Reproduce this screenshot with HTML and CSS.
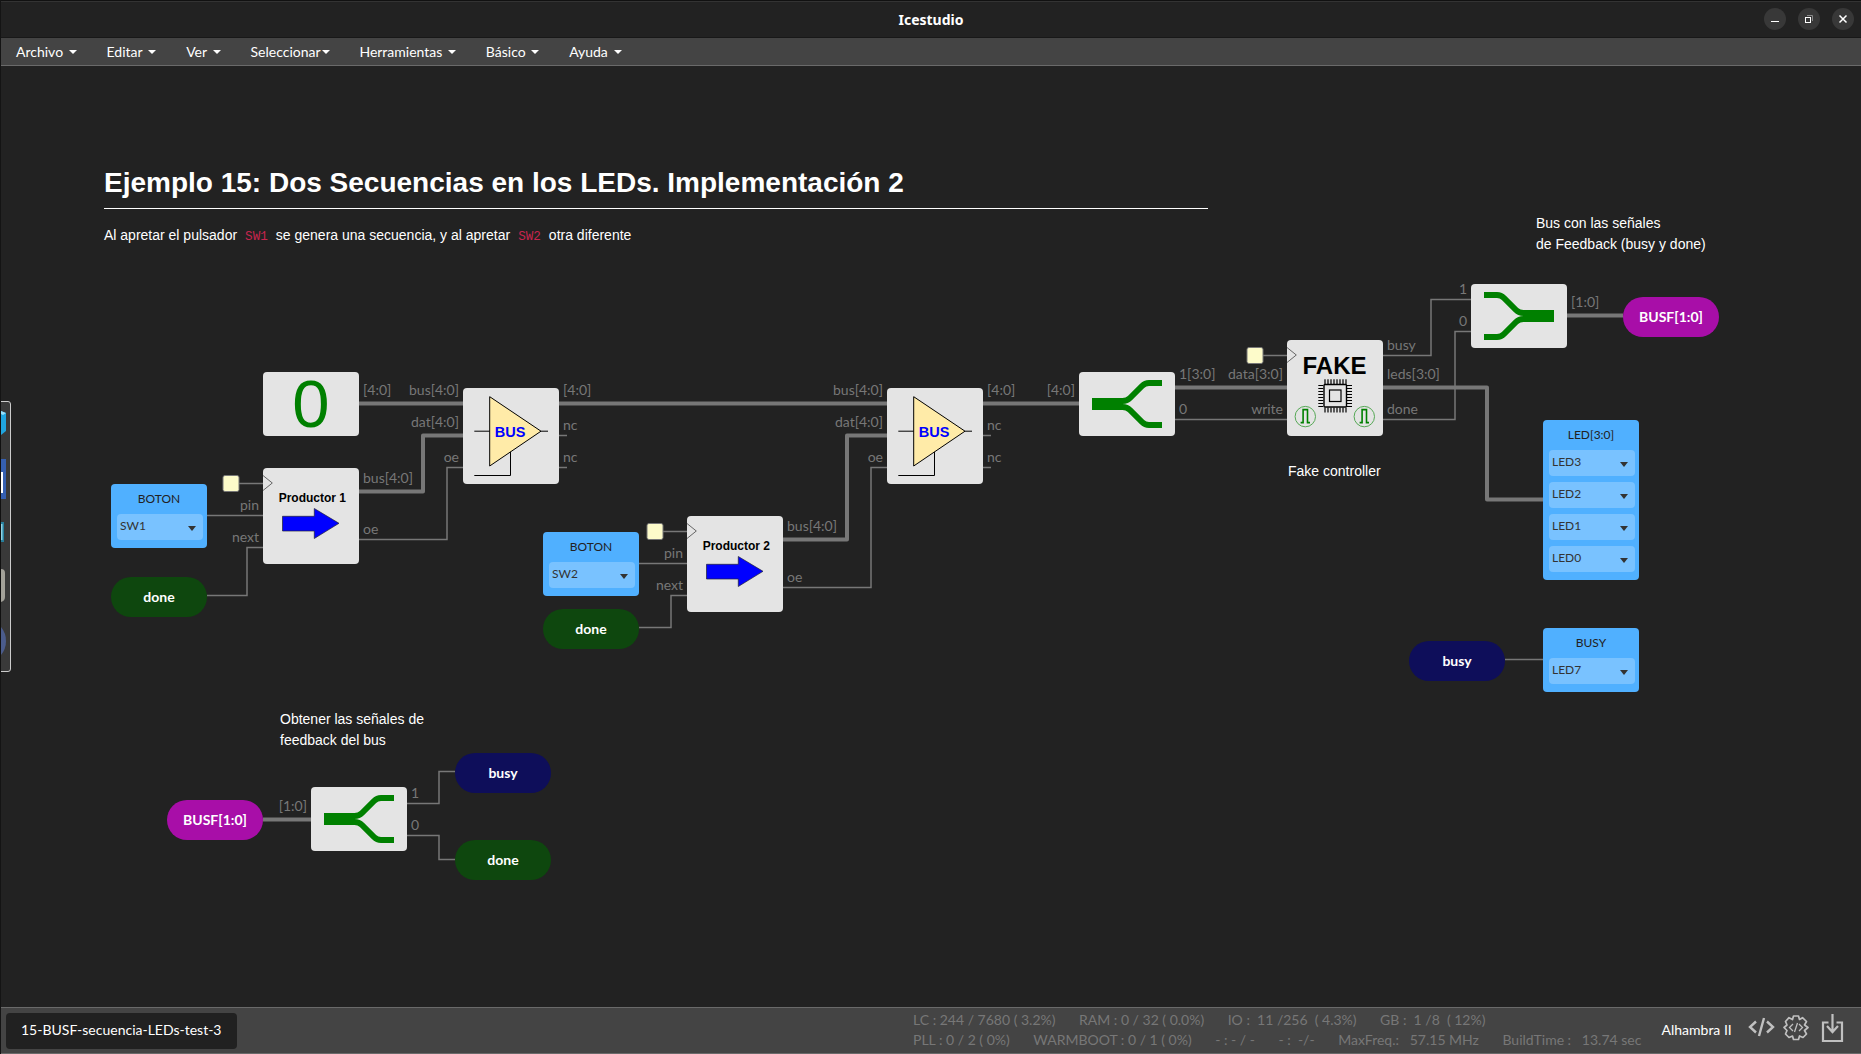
FILE: index.html
```html
<!DOCTYPE html>
<html lang="es">
<head>
<meta charset="utf-8">
<title>Icestudio</title>
<link rel="stylesheet" href="styles.css">
</head>
<body>
<div class="window">
  <header class="titlebar">
    <span class="title">Icestudio</span>
    <div class="window-buttons">
      <svg class="wbtn" viewBox="0 0 22 22"><path d="M7 13.5H15" stroke="#fff"/></svg>
      <svg class="wbtn" viewBox="0 0 22 22"><path d="M9 7.500H14.500V13" stroke="#888"/><rect x="7.500" y="9.500" width="5" height="5" stroke="#fff"/></svg>
      <svg class="wbtn" viewBox="0 0 22 22"><path d="M7.500 7.500L14.500 14.500M14.500 7.500L7.500 14.500" stroke="#fff" stroke-width="1.500"/></svg>
    </div>
  </header>
  <nav class="menu">
    <span class="item">Archivo<i class="caret"></i></span>
    <span class="item">Editar<i class="caret"></i></span>
    <span class="item">Ver<i class="caret"></i></span>
    <span class="item tight">Seleccionar<i class="caret"></i></span>
    <span class="item">Herramientas<i class="caret"></i></span>
    <span class="item">Básico<i class="caret"></i></span>
    <span class="item">Ayuda<i class="caret"></i></span>
  </nav>
  <main class="canvas">
    <svg class="wires" viewBox="0 66 1861 941" width="1861" height="941">
      <defs>
        <g id="split" fill="none" stroke="#008000" stroke-width="6">
          <path d="M13 29H43.500Q48 29 51 26L63 14Q66 11 70 11H83"/>
          <path d="M13 35H43.500Q48 35 51 38L63 50Q66 53 70 53H83"/>
        </g>
        <g id="tristate" fill="none" stroke="#000" stroke-width="1">
          <path d="M11.300 43.200H27M78 43.200H85M11.300 87.500H47.500V60"/>
          <path d="M26.700 8.700L78 43.200L26.700 78Z" fill="#ffeba8"/>
        </g>
        <path id="clk" d="M0 7.500L9.300 15L0 22.500" fill="none" stroke="#666"/>
        <path id="arrow" d="M19.500 48.300H51.300V40.500L76 55.300L51.300 70.500V63H19.500Z" fill="#00f" stroke="#223" stroke-width=".7"/>
        <g id="pulse" fill="none" stroke="#008000">
          <circle r="10.200" stroke="#55a855"/>
          <path d="M-4.700 6H-2.200V-7H2.200V6H4.700" stroke-width="1.600"/>
        </g>
      </defs>

      <g class="thin">
        <path d="M207 515.500H263M207 595.500H247V547.500H263M239 483.500H263"/>
        <path d="M359 539.500H447V467.500H463M559 435.500H567M559 467.500H567"/>
        <path d="M639 563.500H687M639 627.500H671V595.500H687M663 531.500H687"/>
        <path d="M783 587.500H871V467.500H887M983 435.500H991M983 467.500H991"/>
        <path d="M1175 419.500H1287M1263 355.500H1287M1383 355.500H1431V299.500H1471"/>
        <path d="M1383 419.500H1455V331.500H1471M1505 659.500H1543"/>
        <path d="M407 803.500H439V771.500H455M407 835.500H439V859.500H455"/>
      </g>
      <g class="bus">
        <path d="M359 403.500H463M559 403.500H887M983 403.500H1079"/>
        <path d="M359 491.500H423V435.500H463M783 539.500H847V435.500H887"/>
        <path d="M1175 387.500H1287M1383 387.500H1487V499.500H1543"/>
        <path d="M1567 315.500H1623M263 819.500H311"/>
      </g>

      <g class="ports">
        <text x="363" y="395">[4:0]</text><text x="363" y="483">bus[4:0]</text><text x="363" y="534">oe</text>
        <text x="563" y="395">[4:0]</text><text x="563" y="430">nc</text><text x="563" y="462">nc</text>
        <text x="787" y="531">bus[4:0]</text><text x="787" y="582">oe</text>
        <text x="987" y="395">[4:0]</text><text x="987" y="430">nc</text><text x="987" y="462">nc</text>
        <text x="1179" y="379">1[3:0]</text><text x="1179" y="414">0</text>
        <text x="1387" y="350">busy</text><text x="1387" y="379">leds[3:0]</text><text x="1387" y="414">done</text>
        <text x="1571" y="307">[1:0]</text>
        <text x="411" y="798">1</text><text x="411" y="830">0</text>
      </g>
      <g class="ports in">
        <text x="459" y="395">bus[4:0]</text><text x="459" y="427">dat[4:0]</text><text x="459" y="462">oe</text>
        <text x="259" y="510">pin</text><text x="259" y="542">next</text>
        <text x="883" y="395">bus[4:0]</text><text x="883" y="427">dat[4:0]</text><text x="883" y="462">oe</text>
        <text x="683" y="558">pin</text><text x="683" y="590">next</text>
        <text x="1075" y="395">[4:0]</text><text x="1283" y="379">data[3:0]</text><text x="1283" y="414">write</text>
        <text x="1467" y="294">1</text><text x="1467" y="326">0</text>
        <text x="307" y="811">[1:0]</text>
      </g>

      <g class="clocks">
        <rect x="223" y="475.500" width="16" height="16" rx="2"/>
        <rect x="647" y="523.500" width="16" height="16" rx="2"/>
        <rect x="1247" y="347.500" width="16" height="16" rx="2"/>
      </g>

      <g class="blocks">
        <rect x="263" y="372" width="96" height="64" rx="4"/>
        <rect x="463" y="388" width="96" height="96" rx="4"/>
        <rect x="263" y="468" width="96" height="96" rx="4"/>
        <rect x="887" y="388" width="96" height="96" rx="4"/>
        <rect x="687" y="516" width="96" height="96" rx="4"/>
        <rect x="1079" y="372" width="96" height="64" rx="4"/>
        <rect x="1287" y="340" width="96" height="96" rx="4"/>
        <rect x="1471" y="284" width="96" height="64" rx="4"/>
        <rect x="311" y="787" width="96" height="64" rx="4"/>
      </g>
      <text class="zero" x="311" y="427">0</text>
      <use href="#tristate" x="463" y="388"/><use href="#tristate" x="887" y="388"/>
      <text class="bus-name" x="510" y="437">BUS</text><text class="bus-name" x="934" y="437">BUS</text>
      <use href="#clk" x="263" y="468"/><use href="#clk" x="687" y="516"/><use href="#clk" x="1287" y="340"/>
      <use href="#arrow" x="263" y="468"/><use href="#arrow" x="687" y="516"/>
      <text class="producer" x="312.300" y="502">Productor 1</text>
      <text class="producer" x="736.300" y="550">Productor 2</text>
      <use href="#split" x="1079" y="372"/><use href="#split" x="311" y="787"/>
      <use href="#split" transform="translate(1567 284) scale(-1 1)"/>
      <text class="fake" x="1334.500" y="374">FAKE</text>
      <g fill="none" stroke="#000">
        <rect x="1324" y="384.500" width="22.500" height="22.500" rx="1" stroke-width="1.400"/>
        <rect x="1329.500" y="390" width="11.500" height="11.500" stroke-width="1.200"/>
        <path stroke-width="1.200" d="M1325 379.300v5M1328 379.300v5M1331 379.300v5M1334 379.300v5M1337 379.300v5M1340 379.300v5M1343 379.300v5M1346 379.300v5M1325 407.500v5M1328 407.500v5M1331 407.500v5M1334 407.500v5M1337 407.500v5M1340 407.500v5M1343 407.500v5M1346 407.500v5"/>
        <path stroke-width="1.200" d="M1318.300 385.500h5M1318.300 388.500h5M1318.300 391.500h5M1318.300 394.500h5M1318.300 397.500h5M1318.300 400.500h5M1318.300 403.500h5M1318.300 406.500h5M1347 385.500h5M1347 388.500h5M1347 391.500h5M1347 394.500h5M1347 397.500h5M1347 400.500h5M1347 403.500h5M1347 406.500h5"/>
      </g>
      <use href="#pulse" x="1305.300" y="416.600"/><use href="#pulse" x="1364.300" y="416.600"/>
    </svg>

    <section class="note note-title">
      <h1>Ejemplo 15: Dos Secuencias en los LEDs. Implementación 2</h1>
      <p>Al apretar el pulsador <code>SW1</code> se genera una secuencia, y al apretar <code>SW2</code> otra diferente</p>
    </section>
    <p class="note note-bus">Bus con las señales<br>de Feedback (busy y done)</p>
    <p class="note note-fake">Fake controller</p>
    <p class="note note-get">Obtener las señales de<br>feedback del bus</p>

    <div class="io sw1"><span>BOTON</span><div class="select">SW1</div></div>
    <div class="io sw2"><span>BOTON</span><div class="select">SW2</div></div>
    <div class="io leds"><span>LED[3:0]</span><div class="select">LED3</div><div class="select">LED2</div><div class="select">LED1</div><div class="select">LED0</div></div>
    <div class="io led7"><span>BUSY</span><div class="select">LED7</div></div>

    <div class="pill done done-a">done</div>
    <div class="pill done done-b">done</div>
    <div class="pill done done-c">done</div>
    <div class="pill busy busy-a">busy</div>
    <div class="pill busy busy-b">busy</div>
    <div class="pill busf busf-a">BUSF[1:0]</div>
    <div class="pill busf busf-b">BUSF[1:0]</div>

    <svg class="dock" viewBox="0 0 11 272" width="11" height="272">
      <path d="M0 .5H8Q10.500 .5 10.500 3V268Q10.500 270.500 8 270.500H0" fill="#393939" stroke="#ccc"/>
      <path d="M1 10L6 12V30L1 34Z" fill="#20a5df"/><path d="M1 10L6 12L3 14L1 13Z" fill="#9be0fa"/>
      <path d="M1 58H6V98H1Z" fill="#355fb0"/><path d="M1 71H3V92H1Z" fill="#fff"/>
      <path d="M1 121H4V141H1Z" fill="#277f9c"/><path d="M1 123H2.500V139H1Z" fill="#8fd3e6"/>
      <path d="M1 168Q5 168 5 172V196Q5 200 1 201Z" fill="#a3a199"/>
      <path d="M1 226Q6 232 6 240T1 254Z" fill="#4b5c8c"/>
      <path d="M.5 0V272" stroke="#101010"/>
    </svg>
  </main>
  <footer class="status">
    <div class="tab">15-BUSF-secuencia-LEDs-test-3</div>
    <div class="stats">
      <div class="row"><span>LC : 244 / 7680 ( 3.2%)</span><span>RAM : 0 / 32 ( 0.0%)</span><span>IO :  11 /256  ( 4.3%)</span><span>GB :  1 /8  ( 12%)</span></div>
      <div class="row"><span>PLL : 0 / 2 ( 0%)</span><span>WARMBOOT : 0 / 1 ( 0%)</span><span>- : - / -</span><span>- :  -/-</span><span>MaxFreq.:   57.15 MHz</span><span>BuildTime :   13.74 sec</span></div>
    </div>
    <span class="board">Alhambra II</span>
    <svg class="tools" viewBox="0 0 100 32" width="100" height="32" fill="none" stroke="#c0c0c0">
      <path d="M9 7.500L3 13L9 18.500M20 7.500L26 13L20 18.500M17 4L12 22" stroke-width="2.400"/>
      <path d="M46.500 2H51.500L52.500 5.500L55.500 3.700L59.500 7.500L57.500 11L61 13.500L57.500 16.500L59.500 20L56 23.500L52.500 22L51.500 25.500H46.500L45.500 22L42 23.500L38.500 20L40 16.500L37 13.500L40 11L38.500 7.500L42 3.700L45.500 5.500Z" stroke-width="1.700" stroke-linejoin="round"/>
      <path d="M46 10L42.500 13.500L46 17M52 10L55.500 13.500L52 17M50.500 9L47.500 18" stroke-width="1.300"/>
      <path d="M81.500 8.500H76V27H95V8.500H89.500" stroke-width="2.200"/><path d="M85.500 0V17.500M80 12L85.500 18L91 12" stroke-width="2.200"/>
    </svg>
  </footer>
</div>
</body>
</html>
```
FILE: styles.css
```css
* { box-sizing: border-box; }
body { margin: 0; background: #222; color: #fff; font: 14px Lato, sans-serif; overflow: hidden; }
.window { height: 1054px; display: flex; flex-direction: column; border-left: 1px solid #141414; }

.titlebar { height: 38px; display: grid; grid-template-columns: 1fr auto 1fr; align-items: center; background: #222; border-top: 1px solid #111; border-bottom: 1px solid #181818; box-shadow: inset 0 1px #333; }
.title { grid-column: 2; font: bold 14px "Noto Sans", sans-serif; line-height: 20px; padding-top: 1px; }
.window-buttons { display: flex; justify-content: flex-end; gap: 12px; padding-right: 7px; }
.wbtn { width: 22px; height: 22px; border-radius: 50%; background: #383838; fill: none; }

.menu { height: 28px; display: flex; align-items: center; gap: 29.8px; padding: 0 15px; background: #444; border-bottom: 1px solid #6a6a6a; }
.item { display: flex; align-items: center; gap: 5.7px; line-height: 20px; }
.item.tight { gap: 1px; }
.caret { border: 4px solid transparent; border-top-color: #fff; border-bottom: 0; margin-top: 1px; }

.canvas { position: relative; height: 941px; margin-left: -1px; overflow: hidden; }
.wires { display: block; }
.thin { fill: none; stroke: #777; stroke-width: 1.5; }
.bus { fill: none; stroke: #777; stroke-width: 4; stroke-linejoin: round; }
.ports { fill: #777; font-size: 14px; }
.ports.in { text-anchor: end; }
.clocks { fill: #fdfbca; stroke: #777; }
.blocks { fill: #e4e4e4; }
.zero, .bus-name, .producer, .fake { font-family: "Liberation Sans", sans-serif; text-anchor: middle; }
.zero { font-size: 67px; fill: #008000; }
.bus-name { font-size: 14.5px; font-weight: bold; fill: #00f; }
.producer { font-size: 12px; font-weight: bold; fill: #000; }
.fake { font-size: 24px; font-weight: bold; fill: #000; }

.note { position: absolute; margin: 0; font: 14px/21px "Liberation Sans", sans-serif; white-space: nowrap; }
.note-title { left: 104px; top: 95px; width: 1104px; }
.note h1 { margin: 0 0 16px; height: 48px; font-size: 28px; line-height: 42px; padding-top: 1px; border-bottom: 1px solid #fff; }
.note p { margin: 0; }
.note code { font: 12.6px "Liberation Mono", monospace; color: #c7254e; padding: 2px 4.15px; }
.note-bus { left: 1536px; top: 147px; }
.note-fake { left: 1288px; top: 395px; }
.note-get { left: 280px; top: 643px; }

.io { position: absolute; width: 96px; padding: 4px 4px 8px 6px; display: flex; flex-direction: column; gap: 6px; background: #50b0ff; border-radius: 4px; color: #333; font-size: 12px; }
.io span { height: 20px; line-height: 22px; text-align: center; padding-right: 2px; color: #222; }
.select { width: 86px; height: 26px; padding: 0 7px 0 3px; display: flex; align-items: center; justify-content: space-between; line-height: 22px; padding-bottom: 2px; background: #79c2ff; border-radius: 4px; }
.select::after { content: ""; border: 4px solid transparent; border-top: 5px solid #333; border-bottom: 0; margin-top: 4px; }
.sw1 { left: 111px; top: 418px; }
.sw2 { left: 543px; top: 466px; }
.leds { left: 1543px; top: 354px; }
.led7 { left: 1543px; top: 562px; }

.pill { position: absolute; width: 96px; height: 40px; border-radius: 20px; line-height: 40px; text-align: center; font-weight: bold; }
.done { background: #0e470e; }
.busy { background: #0e0e5a; }
.busf { background: #a80ea8; }
.done-a { left: 111px; top: 511px; }
.done-b { left: 543px; top: 543px; }
.done-c { left: 455px; top: 774px; }
.busy-a { left: 455px; top: 687px; }
.busy-b { left: 1409px; top: 575px; }
.busf-a { left: 1623px; top: 231px; }
.busf-b { left: 167px; top: 734px; }
.dock { position: absolute; left: 0; top: 335px; }

.status { height: 47px; display: flex; background: #444; border-top: 1px solid #6a6a6a; border-bottom: 1px solid #6a6a6a; }
.tab { width: 231px; height: 36px; margin: 5px 0 0 5px; padding-left: 15px; line-height: 33px; background: #212121; border-radius: 4px; }
.stats { margin: 1px 0 0 676px; width: 748px; color: #777; }
.row { display: flex; gap: 23.5px; height: 20px; line-height: 21px; }
.row span { white-space: pre; }
.board { line-height: 43px; width: 84px; padding-left: .5px; }
.tools { margin: 6px 0 0 2px; }
```
